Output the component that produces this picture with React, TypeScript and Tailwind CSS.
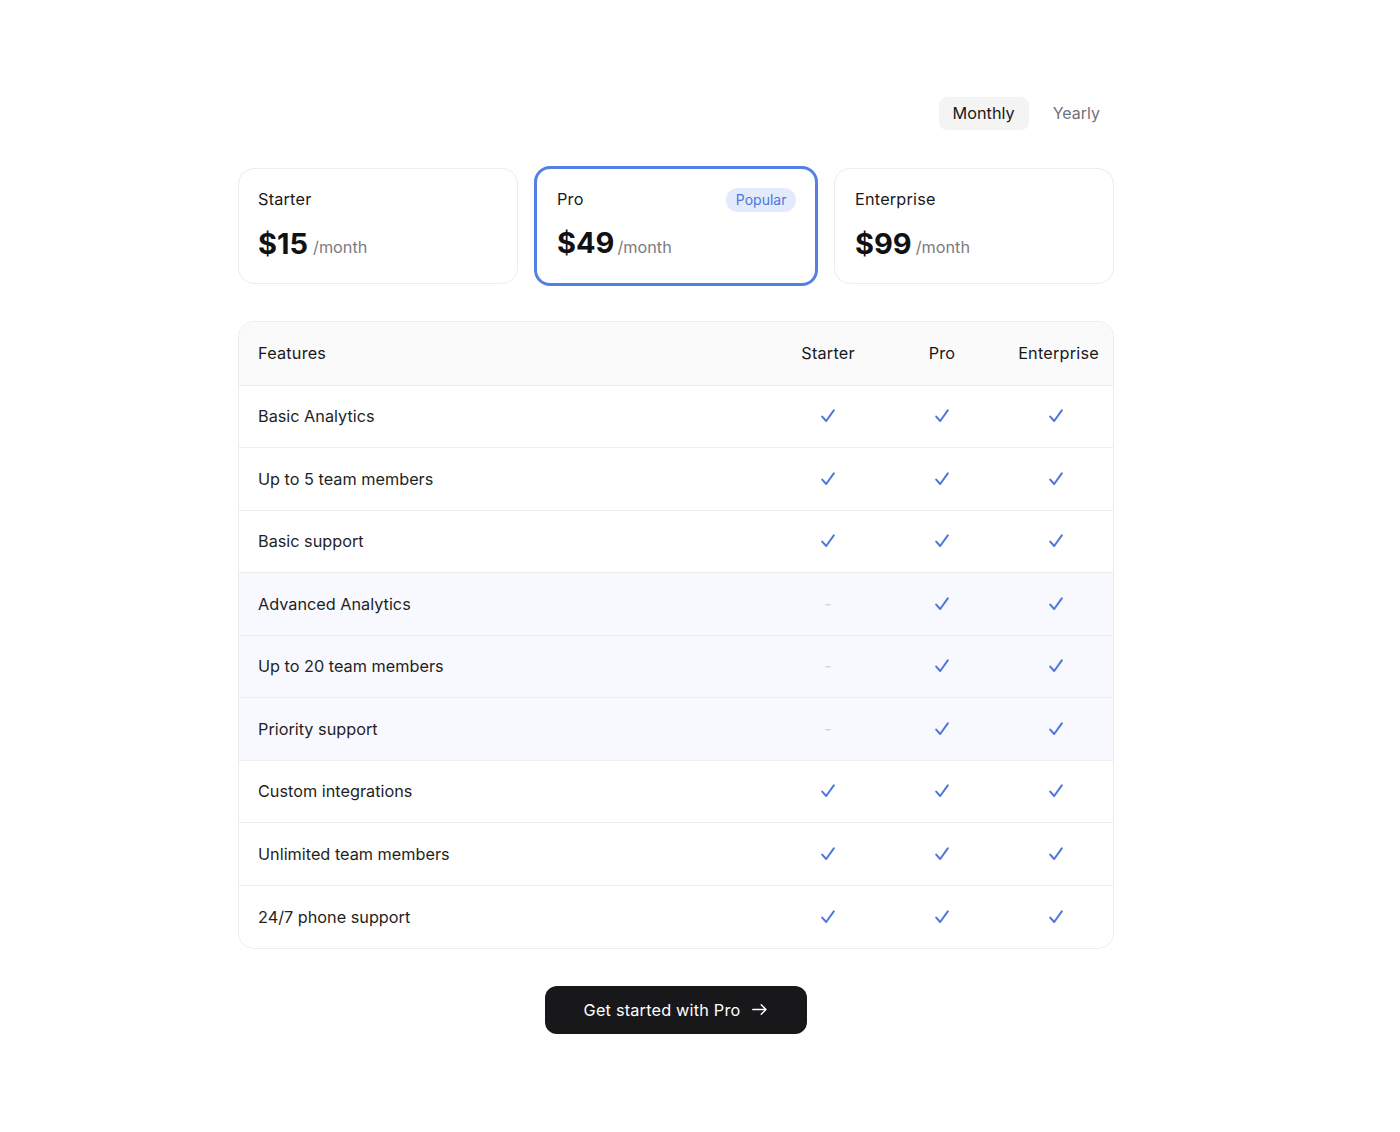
const features = [
  { name: 'Basic Analytics', starter: true },
  { name: 'Up to 5 team members', starter: true },
  { name: 'Basic support', starter: true },
  { name: 'Advanced Analytics', starter: false, tint: true },
  { name: 'Up to 20 team members', starter: false, tint: true },
  { name: 'Priority support', starter: false, tint: true },
  { name: 'Custom integrations', starter: true },
  { name: 'Unlimited team members', starter: true },
  { name: '24/7 phone support', starter: true },
];

function Tick() {
  return (
    <div className="flex justify-center">
      <svg width="14" height="14" viewBox="0 0 14 14" fill="none" stroke="#4f77db" strokeWidth="2" strokeLinecap="round" strokeLinejoin="round">
        <path d="M1.2 7.6 L5.2 12 L12.8 1.4" />
      </svg>
    </div>
  );
}

function Price({ amount, top, gap, lift }: { amount: string; top: string; gap: string; lift: string }) {
  return (
    <div className={`flex items-end ${gap} ${top}`}>
      <span className="text-[29px] leading-[36px] font-bold text-[#111114]">{amount}</span>
      <span className={`text-[16.25px] leading-[20px] ${lift} text-[#7b7b83]`}>/month</span>
    </div>
  );
}

export default function App() {
  return (
    <div className="w-[876px] ml-[238px] pt-[97px] pb-[98px] font-['Inter',sans-serif] text-[#18181b] text-[16.25px]">
      <div className="flex justify-end items-center gap-[10px]">
        <button className="h-[32.5px] px-[14px] rounded-lg bg-[#f4f4f5] text-[#18181b]">Monthly</button>
        <button className="h-[32.5px] px-[14px] rounded-lg text-base text-[#71717a]">Yearly</button>
      </div>

      <div className="grid grid-cols-[280px_284px_280px] gap-4 items-center mt-[36.5px]">
        <div className="h-[116px] rounded-2xl border border-[#ececee] bg-white px-[19px] pt-[19px]">
          <p className="leading-[22px] tracking-[0.2px]">Starter</p>
          <Price amount="$15" top="mt-[16px]" gap="gap-[5px]" lift="mb-[5.4px]" />
        </div>
        <div className="h-[120px] rounded-2xl border-[3px] border-[#5580e3] bg-white pl-[20px] pr-[19px] pt-[19.5px]">
          <div className="flex items-center justify-between h-[24px] -mt-px">
            <p className="tracking-[0.2px]">Pro</p>
            <span className="h-[24px] px-[9.5px] rounded-full bg-[#e2eafb] text-sm leading-[24px] text-[#4f77db]">Popular</span>
          </div>
          <Price amount="$49" top="mt-[13.5px]" gap="gap-[3px]" lift="mb-[4.4px]" />
        </div>
        <div className="h-[116px] rounded-2xl border border-[#ececee] bg-white pl-[20px] pr-[19px] pt-[19px]">
          <p className="leading-[22px] tracking-[0.2px]">Enterprise</p>
          <Price amount="$99" top="mt-[16px]" gap="gap-[4px]" lift="mb-[5.4px]" />
        </div>
      </div>

      <div className="mt-[35px] rounded-2xl border border-[#ececee] overflow-hidden">
        <div className="grid grid-cols-[1fr_114px_114px_114px] items-center h-[63.5px] bg-[#fafafa] border-b border-[#ececee] pl-[19px] tracking-[0.2px]">
          <span>Features</span>
          <span className="text-center">Starter</span>
          <span className="text-center">Pro</span>
          <span className="text-center whitespace-nowrap pl-[5px]">Enterprise</span>
        </div>
        {features.map((f, i) => (
          <div
            key={f.name}
            className={`grid grid-cols-[1fr_114px_114px_114px] items-center ${
              i < features.length - 1 ? 'h-[62.5px] border-b border-[#ececee]' : 'h-[62px] pt-px'
            } pl-[19px] ${f.tint ? 'bg-[#f8f9fe]' : 'bg-white'}`}
          >
            <span className="text-[#1f1f23]">{f.name}</span>
            {f.starter ? <Tick /> : <div className="text-center text-[#d4d4d8]">-</div>}
            <Tick />
            <Tick />
          </div>
        ))}
      </div>

      <div className="flex justify-center mt-[37.5px]">
        <button className="flex items-center gap-[12px] h-[47.5px] pl-[38.5px] pr-[39.5px] rounded-xl bg-[#18181b] text-white tracking-[0.2px]">
          Get started with Pro
          <svg width="15" height="11" viewBox="0 0 15 11" fill="none" stroke="currentColor" strokeWidth="1.4" strokeLinecap="round" strokeLinejoin="round">
            <path d="M0.8 5.5 H14 M9.2 0.8 L14 5.5 L9.2 10.2" />
          </svg>
        </button>
      </div>
    </div>
  );
}
